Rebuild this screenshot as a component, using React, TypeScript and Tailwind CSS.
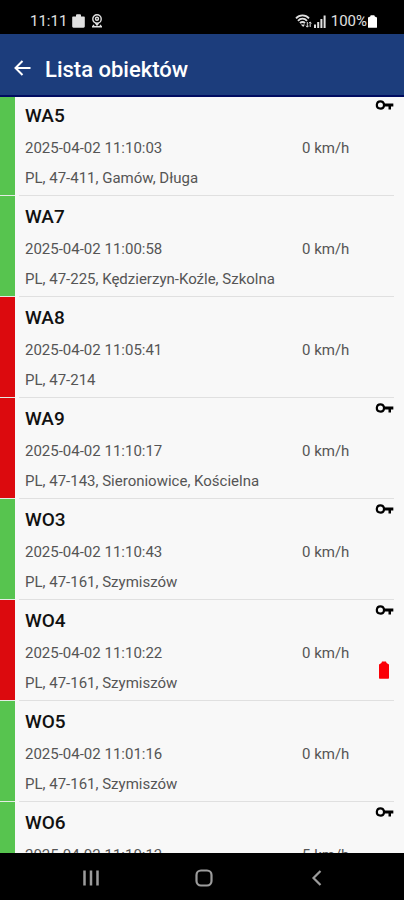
type Vehicle = {
  name: string;
  time: string;
  speed: number;
  address: string;
  moving: boolean;
  ignition?: boolean;
  lowBattery?: boolean;
};

const vehicles: Vehicle[] = [
  { name: "WA5", time: "2025-04-02 11:10:03", speed: 0, address: "PL, 47-411, Gamów, Długa", moving: true, ignition: true },
  { name: "WA7", time: "2025-04-02 11:00:58", speed: 0, address: "PL, 47-225, Kędzierzyn-Koźle, Szkolna", moving: true },
  { name: "WA8", time: "2025-04-02 11:05:41", speed: 0, address: "PL, 47-214", moving: false },
  { name: "WA9", time: "2025-04-02 11:10:17", speed: 0, address: "PL, 47-143, Sieroniowice, Kościelna", moving: false, ignition: true },
  { name: "WO3", time: "2025-04-02 11:10:43", speed: 0, address: "PL, 47-161, Szymiszów", moving: true, ignition: true },
  { name: "WO4", time: "2025-04-02 11:10:22", speed: 0, address: "PL, 47-161, Szymiszów", moving: false, ignition: true, lowBattery: true },
  { name: "WO5", time: "2025-04-02 11:01:16", speed: 0, address: "PL, 47-161, Szymiszów", moving: true },
  { name: "WO6", time: "2025-04-02 11:10:13", speed: 5, address: "PL, 47-161, Szymiszów", moving: true, ignition: true },
];

export default function App() {
  return (
    <div className="flex h-screen flex-col overflow-hidden bg-[#f8f8f8] font-['Roboto',sans-serif]">
      <StatusBar />

      <header className="relative z-10 flex h-[61px] shrink-0 items-center gap-3 bg-[#1c3d7c] px-[13px] pt-[10px] text-white shadow-[0_2px_0_#000c60]">
        <button type="button" aria-label="Wstecz" className="pb-1">
          <svg viewBox="0 0 20 20" className="size-5" fill="none" stroke="currentColor" strokeWidth="2">
            <path d="M17.5 10H3M9.500 3 2.500 10l7 7" />
          </svg>
        </button>
        <h1 className="text-[22px] leading-7 font-medium">Lista obiektów</h1>
      </header>

      <ul className="min-h-0 flex-1 overflow-hidden">
        {vehicles.map((vehicle) => (
          <VehicleRow key={vehicle.name} vehicle={vehicle} />
        ))}
      </ul>

      <NavBar />
    </div>
  );
}

function VehicleRow({ vehicle }: { vehicle: Vehicle }) {
  return (
    <li className="flex h-[101px]">
      <div className={`w-[15px] shrink-0 border-b border-[#e4ece4] ${vehicle.moving ? "bg-[#57c44f]" : "bg-[#dc0a0e]"}`} />
      <div className="mr-[10px] ml-1 flex min-w-0 flex-1 border-b border-[#e0e0e0] pl-[6px]">
        <div className="min-w-0 flex-1 text-[15px] leading-[30px] whitespace-nowrap text-[#555]">
          <h2 className="pt-[7px] text-[19px] leading-7 font-medium text-[#111]">{vehicle.name}</h2>
          <div className="flex pt-[3px]">
            <time className="flex-1">{vehicle.time}</time>
            <span className="w-12">{vehicle.speed} km/h</span>
          </div>
          <p>{vehicle.address}</p>
        </div>
        <div className="ml-6 flex w-5 shrink-0 flex-col items-center justify-between pb-[21px]">
          {vehicle.ignition && <KeyIcon />}
          {vehicle.lowBattery && <BatteryIcon className="h-[18px] w-[10px] text-[#fb0007]" />}
        </div>
      </div>
    </li>
  );
}

function KeyIcon() {
  return (
    <svg viewBox="0 0 24 24" className="size-5 text-black" fill="currentColor" aria-label="Zapłon">
      <path d="M13.2 10.3A5.700 5.700 0 0 0 7.700 6.200a5.700 5.700 0 1 0 5.500 7.500H17.400v3.800h3v-3.800h2.800v-3.400zM7.700 15a3 3 0 1 1 0-6 3 3 0 0 1 0 6z" />
    </svg>
  );
}

function BatteryIcon({ className }: { className: string }) {
  return (
    <svg viewBox="0 0 10 18" className={className} fill="currentColor" preserveAspectRatio="none" aria-label="Bateria">
      <path d="M3 .5h4l.6 1.500L10 3.600V17a.7.7 0 0 1-.7.7H.7A.7.7 0 0 1 0 17V3.600L2.400 2z" />
    </svg>
  );
}

function StatusBar() {
  return (
    <div className="flex h-[34px] shrink-0 items-center bg-black pt-2 pr-[27px] pl-[30px] text-[15px] leading-5 text-[#e0e0e0]">
      <span>11:11</span>
      <svg viewBox="0 0 13 14" className="ml-[5px] h-[14px] w-[13px]" fill="currentColor">
        <path d="M4 2.500V1.200C4 .6 4.400.3 5 .3h3c.6 0 1 .3 1 .9v1.300h3c.5 0 .8.3.8.8v9c0 .8-.5 1.400-1.300 1.400h-10C.7 13.700.2 13.100.2 12.300v-9c0-.5.3-.8.8-.8z" />
      </svg>
      <svg viewBox="0 0 12 14" className="ml-[6px] h-[14px] w-3" fill="none" stroke="currentColor" strokeWidth="1.400">
        <circle cx="6" cy="5" r="4.200" />
        <circle cx="6" cy="4.800" r="1.500" />
        <path d="M4.500 9 6 11l1.500-2M1 12.800h10M3 10.800l-1.500 2M9 10.800l1.500 2" />
      </svg>
      <div className="flex-1" />
      <svg viewBox="0 0 17 14" className="h-[14px] w-[17px]" fill="none" stroke="currentColor" strokeWidth="1.800">
        <path d="M1 4.300C4.500.4 10.500.4 14 4.300M3 6.800c2.500-2.800 6.500-2.800 9 0M5 9.200c1.500-1.600 3.500-1.600 5 0" />
        <path d="M5.800 10.500 8.200 13l1.800-2.500z" fill="currentColor" stroke="none" />
        <path d="M12.300 8v5M11 11.700l1.300 1.500 1.300-1.500M15.200 13V8M14 9.300 15.200 8l1.300 1.300" strokeWidth="1" />
      </svg>
      <svg viewBox="0 0 12 13" className="ml-[2px] h-[13px] w-3" fill="currentColor">
        <path d="M0 9.500h2V13H0zM3.200 7h2v6h-2zM6.400 4h2v9h-2zM9.600.500h2V13h-2z" />
      </svg>
      <span className="ml-[5px]">100%</span>
      <BatteryIcon className="ml-[1px] h-[13px] w-[9px] text-white" />
    </div>
  );
}

function NavBar() {
  return (
    <nav className="flex h-[47px] shrink-0 items-center justify-around bg-black pt-[2px] pr-[30px] pl-[34px] text-[#9c9c9c]">
      <button type="button" aria-label="Ostatnie">
        <svg viewBox="0 0 18 18" className="size-[18px]" stroke="currentColor" strokeWidth="2.500">
          <path d="M2.500 1.500v15M9 1.500v15M15.500 1.500v15" />
        </svg>
      </button>
      <button type="button" aria-label="Ekran główny">
        <svg viewBox="0 0 18 18" className="size-[18px]" fill="none" stroke="currentColor" strokeWidth="2.200">
          <rect x="1.500" y="1.500" width="15" height="15" rx="4.500" />
        </svg>
      </button>
      <button type="button" aria-label="Wstecz">
        <svg viewBox="0 0 18 18" className="size-[18px]" fill="none" stroke="currentColor" strokeWidth="2.200">
          <path d="M12.500 2 5.500 9l7 7" />
        </svg>
      </button>
    </nav>
  );
}
